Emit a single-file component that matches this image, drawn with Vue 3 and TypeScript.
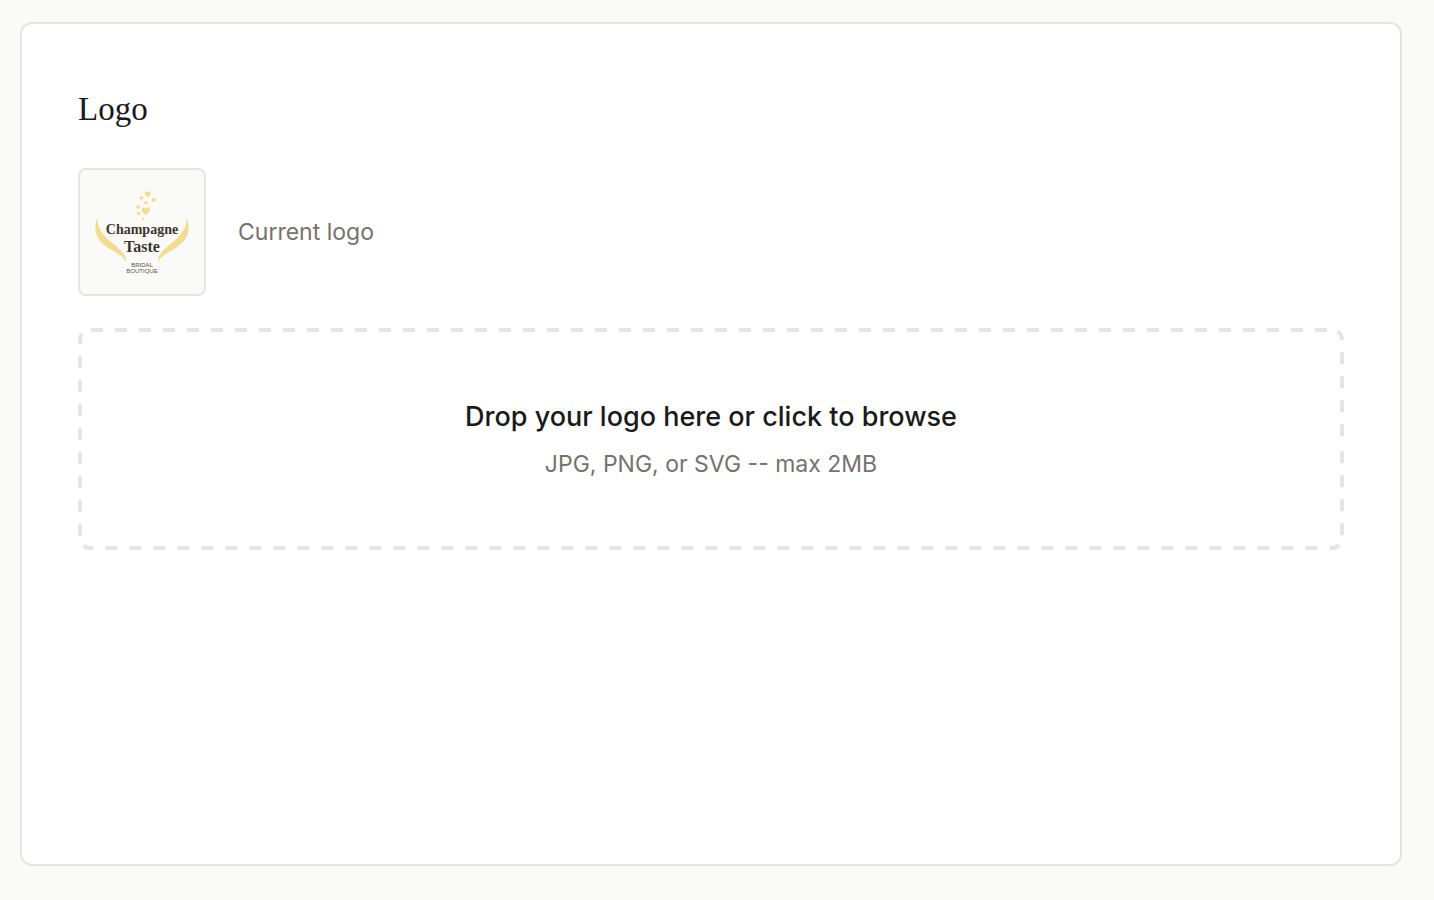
<script setup lang="ts">
import { ref } from 'vue'

const fileName = ref<string>('')

function onPick(event: Event): void {
  const input = event.target as HTMLInputElement
  fileName.value = input.files?.[0]?.name ?? ''
}
</script>

<template>
  <main class="page">
    <section class="card" aria-labelledby="logo-title">
      <h2 id="logo-title" class="title">Logo</h2>

      <div class="current">
        <div class="thumb">
          <svg class="brand" viewBox="0 0 124 124" role="img" aria-label="Champagne Taste Bridal Boutique">
            <g fill="#f3dc8f">
              <path d="M67.5 27.2C64.8 25.2 64.2 22.7 65.4 21.7C66.4 20.9 67.7 21.6 68 22.5C68.9 21.4 70.4 21.5 70.7 22.7C71 24.3 69.5 25.7 67.5 27.2Z" />
              <path d="M65.7 45C62 42.4 60.7 39.6 62.3 38.2C63.5 37.2 65 38 65.5 39C66.4 37 69.2 36.4 70 38.3C70.8 40.5 68.3 43 65.7 45Z" />
              <circle cx="61.5" cy="27.8" r="1.8" />
              <circle cx="73.7" cy="29.9" r="2.2" />
              <circle cx="65.8" cy="32.8" r="1.8" />
              <circle cx="58.2" cy="37.1" r="1.9" />
              <circle cx="58.6" cy="43.5" r="1.7" />
              <circle cx="63.3" cy="48.7" r="1.3" />
              <path d="M17 48C14 58 15 66 22 73C30 81 43 84 46 92C47 84 38 78 30 71C21 63 18 58 17 48Z" />
              <path d="M107 48C110 58 109 66 102 73C94 81 81 84 78 92C77 84 86 78 94 71C103 63 106 58 107 48Z" />
            </g>
            <g class="brand-name" text-anchor="middle">
              <text x="62" y="64">Champagne</text>
              <text class="brand-second" x="62" y="82">Taste</text>
            </g>
            <g class="brand-sub" text-anchor="middle">
              <text x="62" y="97">BRIDAL</text>
              <text x="62" y="103">BOUTIQUE</text>
            </g>
          </svg>
        </div>
        <p class="caption">Current logo</p>
      </div>

      <label class="drop" for="logo-file">
        <svg class="outline outline-start" aria-hidden="true"><rect rx="12" /></svg>
        <svg class="outline outline-end" aria-hidden="true"><rect rx="12" /></svg>
        <span class="drop-title">{{ fileName || 'Drop your logo here or click to browse' }}</span>
        <span class="drop-hint">JPG, PNG, or SVG -- max 2MB</span>
        <input id="logo-file" class="file" type="file" accept=".jpg,.jpeg,.png,.svg" @change="onPick" />
      </label>
    </section>
  </main>
</template>

<style>
body {
  margin: 0;
  background: #fafaf8;
}
</style>

<style scoped>
.page {
  box-sizing: border-box;
  display: flex;
  min-height: 100vh;
  padding: 22px 32px 34px 20px;
  background: #fafaf8;
  color: #1a1a1a;
  font-family: Inter, "Open Sans", sans-serif;
}

.card {
  box-sizing: border-box;
  flex: 1;
  min-width: 0;
  padding: 56px;
  border: 2px solid #e5e5e3;
  border-radius: 12px;
  background: #fff;
}

.title {
  margin: 0 0 30px;
  font-family: "Liberation Serif", serif;
  font-size: 33px;
  font-weight: 400;
  line-height: 58px;
}

.current {
  display: flex;
  align-items: center;
  gap: 32px;
  margin-bottom: 32px;
}

.thumb {
  box-sizing: border-box;
  width: 128px;
  height: 128px;
  border: 2px solid #e5e5e3;
  border-radius: 8px;
  background: #fafaf8;
}

.brand {
  display: block;
  width: 100%;
  height: 100%;
}

.brand-name {
  fill: #40362a;
  font-family: "Liberation Serif", serif;
  font-size: 14px;
  font-weight: 700;
}

.brand-second {
  font-size: 16px;
}

.brand-sub {
  fill: #5b5348;
  font-family: "Liberation Sans", sans-serif;
  font-size: 6px;
}

.caption {
  margin: 0;
  color: #78716c;
  font-size: 23px;
  line-height: 36px;
}

.drop {
  position: relative;
  box-sizing: border-box;
  display: flex;
  flex-direction: column;
  align-items: center;
  gap: 8px;
  padding: 68px;
  border-radius: 12px;
  text-align: center;
  cursor: pointer;
}

.outline {
  position: absolute;
  inset: 0;
  width: 100%;
  height: 100%;
  overflow: hidden;
  border-radius: 12px;
}

/* The stroke is centred on the outer edge, so only its inner half shows. */
.outline rect {
  width: 100%;
  height: 100%;
  fill: none;
  stroke: #e5e5e3;
  stroke-width: 8px;
  stroke-dasharray: 12 12;
}

/* The dash run begins and ends halfway down the right edge. */
.outline-start {
  clip-path: polygon(13px 0, 100% 0, 100% 50%, 13px 50%);
}

.outline-start rect {
  stroke-dashoffset: -1px;
}

.outline-end {
  clip-path: polygon(0 0, 10px 0, 10px 50%, 100% 50%, 100% 100%, 0 100%);
}

.outline-end rect {
  stroke-dashoffset: -4px;
}

.drop-title {
  font-size: 27px;
  font-weight: 500;
  line-height: 42px;
}

.drop-hint {
  color: #78716c;
  font-size: 23px;
  line-height: 36px;
}

.file {
  position: absolute;
  inset: 0;
  width: 100%;
  height: 100%;
  opacity: 0;
  cursor: pointer;
}
</style>
